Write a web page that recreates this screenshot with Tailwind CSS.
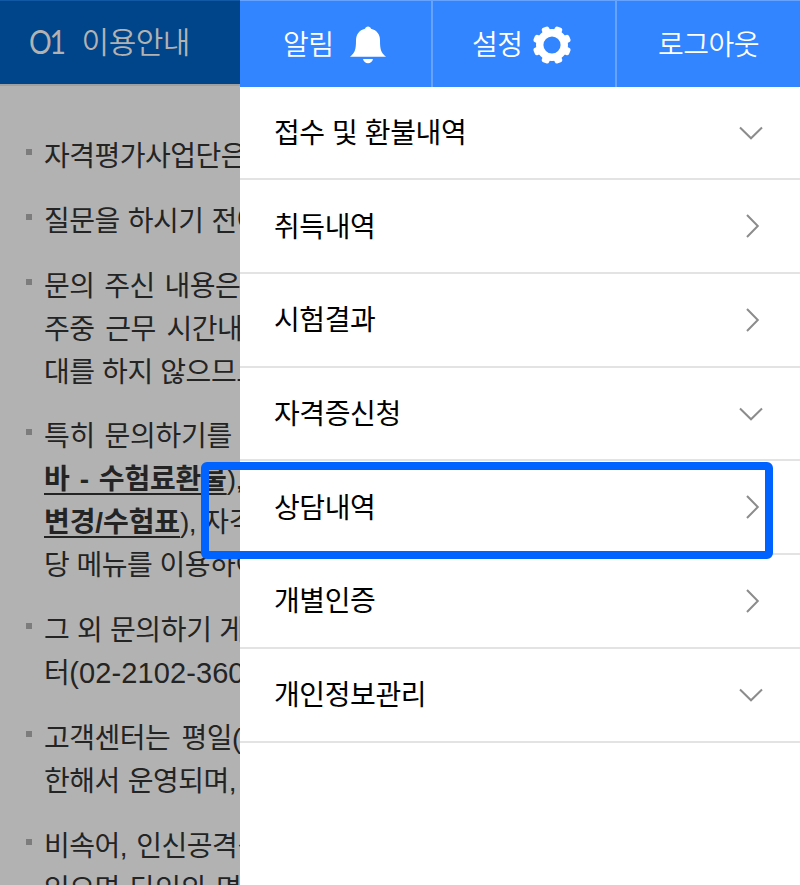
<!DOCTYPE html>
<html lang="ko">

<head>
    <meta charset="UTF-8">
    <meta name="viewport" content="width=device-width, initial-scale=1.0">
    <title>이용안내</title>
    <script src="https://cdn.jsdelivr.net/npm/@tailwindcss/browser@4"></script>
</head>

<body class="relative h-[885px] w-[800px] overflow-hidden bg-[#b2b2b2] font-['Liberation_Sans','Noto_Sans_CJK_KR',sans-serif] text-[28px] tracking-[-0.5px]">
    <!-- Page -->
    <div class="w-full">
        <header class="flex h-[86px] items-center border-t border-b-2 border-t-[#1158a5] border-b-[#a0a0a0] bg-[#004489] pb-[2px] pl-[29px] font-['Lato','Noto_Sans_CJK_KR',sans-serif] text-[#b2b2b2]">
            <span class="mr-[12px] origin-left scale-x-[0.86] text-[33px] tracking-[-2.5px]">O1</span>
            <h1 class="text-[30px] font-[350] tracking-[-0.5px]">이용안내</h1>
        </header>
        <ul class="space-y-[21.8px] pt-[47px] pl-[26px] leading-[43px] whitespace-nowrap text-[#242424]">
            <li class="flex">
                <i class="mt-[16px] mr-[12px] size-[6px] bg-[#7c7c7c]"></i>
                <p class="translate-y-[2px]">자격평가사업단은</p>
            </li>
            <li class="flex">
                <i class="mt-[16px] mr-[12px] size-[6px] bg-[#7c7c7c]"></i>
                <p class="translate-y-[2px] [word-spacing:0.7px]">질문을 하시기 전에</p>
            </li>
            <li class="flex">
                <i class="mt-[16px] mr-[12px] size-[6px] bg-[#7c7c7c]"></i>
                <div class="translate-y-[2px]">
                    <p class="[word-spacing:2.5px]">문의 주신 내용은</p>
                    <p class="[word-spacing:3.5px]">주중 근무 시간내</p>
                    <p class="tracking-[-0.4px]">대를 하지 않으므로</p>
                </div>
            </li>
            <li class="flex">
                <i class="mt-[16px] mr-[12px] size-[6px] bg-[#7c7c7c]"></i>
                <div class="translate-y-[2px]">
                    <p class="tracking-[-0.3px] [word-spacing:2.2px]">특히 문의하기를</p>
                    <p class="[word-spacing:2.5px]"><b class="tracking-[-0.2px] underline decoration-2 underline-offset-4">바 - 수험료환불</b>),</p>
                    <p><b class="tracking-[-0.1px] underline decoration-2 underline-offset-4">변경/수험표</b>), 자격</p>
                    <p>당 메뉴를 이용하여</p>
                </div>
            </li>
            <li class="flex">
                <i class="mt-[16px] mr-[12px] size-[6px] bg-[#7c7c7c]"></i>
                <div class="translate-y-[2px]">
                    <p class="tracking-[-0.3px]">그 외 문의하기 게</p>
                    <p>터<span class="text-[29px] tracking-[0.1px]">(02-2102-3600</span></p>
                </div>
            </li>
            <li class="flex">
                <i class="mt-[16px] mr-[12px] size-[6px] bg-[#7c7c7c]"></i>
                <div class="translate-y-[2px]">
                    <p class="[word-spacing:4px]">고객센터는 평일(</p>
                    <p class="[word-spacing:0.7px]">한해서 운영되며,</p>
                </div>
            </li>
            <li class="flex">
                <i class="mt-[16px] mr-[12px] size-[6px] bg-[#7c7c7c]"></i>
                <div class="translate-y-[2px]">
                    <p class="[word-spacing:2px]">비속어, 인신공격성</p>
                    <p class="[word-spacing:3px]">있으면 타인의 명</p>
                </div>
            </li>
        </ul>
    </div>

    <!-- Side menu -->
    <aside class="absolute top-0 left-[240px] h-[885px] w-[560px] bg-white">
        <nav class="flex h-[87px] border-t border-[#66a3ff] bg-[#3385ff] pt-px font-[350] text-white">
            <a class="-mt-px flex w-[193px] items-center border-r-2 border-[#66a3ff] pt-[2px] pl-[43px]">
                <span class="pt-[2px]">알림</span>
                <svg class="ml-[16px] h-[38px] w-[36px]" viewBox="0 0 36 38" fill="currentColor">
                    <path d="M18 .5c-1.500 0-2.500 1-3 2.200C9 4 6 8.500 6 14.500c0 9-1 12.500-6 16.200h36c-5-3.700-6-7.200-6-16.200C30 8.500 27 4 21 2.700 20.500 1.500 19.500.5 18 .5z" />
                    <path d="M13 33h10c-.5 2.400-2.500 4.200-5 4.200s-4.500-1.800-5-4.200z" />
                </svg>
            </a>
            <a class="-mt-px flex w-[184px] items-center border-r-2 border-[#66a3ff] pt-[2px] pl-[39px]">
                <span class="pt-[2px]">설정</span>
                <svg class="ml-[10px] size-[38px]" viewBox="-19 -19 38 38" fill="currentColor">
                    <circle r="12.300" fill="none" stroke="currentColor" stroke-width="7.400" />
                    <rect x="-3.900" y="-19.200" width="7.800" height="8" rx="2.400" transform="rotate(22.5)" />
                    <rect x="-3.900" y="-19.200" width="7.800" height="8" rx="2.400" transform="rotate(67.5)" />
                    <rect x="-3.900" y="-19.200" width="7.800" height="8" rx="2.400" transform="rotate(112.5)" />
                    <rect x="-3.900" y="-19.200" width="7.800" height="8" rx="2.400" transform="rotate(157.5)" />
                    <rect x="-3.900" y="-19.200" width="7.800" height="8" rx="2.400" transform="rotate(202.5)" />
                    <rect x="-3.900" y="-19.200" width="7.800" height="8" rx="2.400" transform="rotate(247.5)" />
                    <rect x="-3.900" y="-19.200" width="7.800" height="8" rx="2.400" transform="rotate(292.5)" />
                    <rect x="-3.900" y="-19.200" width="7.800" height="8" rx="2.400" transform="rotate(337.5)" />
                </svg>
            </a>
            <a class="flex flex-1 items-center justify-center pt-[3px]">로그아웃</a>
        </nav>
        <ul class="-mt-[0.3px] text-black">
            <li class="flex h-[93.7px] items-center justify-between border-b-2 border-[#e3e3e3] pr-[36px] pl-[34px]">
                <span class="pt-[3px] tracking-[-0.4px]">접수 및 환불내역</span>
                <svg class="h-[14px] w-[26px]" viewBox="0 0 26 14" fill="none" stroke="#8c8c8c" stroke-width="2"><path d="M2 1.500 13 12.300 24 1.500" /></svg>
            </li>
            <li class="flex h-[93.7px] items-center justify-between border-b-2 border-[#e3e3e3] pr-[40px] pl-[34px]">
                <span class="pt-[3px] tracking-[-0.4px]">취득내역</span>
                <svg class="h-[26px] w-[14px]" viewBox="0 0 14 26" fill="none" stroke="#8c8c8c" stroke-width="2"><path d="M1 2 11.800 13 1 24" /></svg>
            </li>
            <li class="flex h-[93.7px] items-center justify-between border-b-2 border-[#e3e3e3] pr-[40px] pl-[34px]">
                <span class="pt-[3px] tracking-[-0.4px]">시험결과</span>
                <svg class="h-[26px] w-[14px]" viewBox="0 0 14 26" fill="none" stroke="#8c8c8c" stroke-width="2"><path d="M1 2 11.800 13 1 24" /></svg>
            </li>
            <li class="flex h-[93.7px] items-center justify-between border-b-2 border-[#e3e3e3] pr-[36px] pl-[34px]">
                <span class="pt-[3px] tracking-[-0.4px]">자격증신청</span>
                <svg class="h-[14px] w-[26px]" viewBox="0 0 26 14" fill="none" stroke="#8c8c8c" stroke-width="2"><path d="M2 1.500 13 12.300 24 1.500" /></svg>
            </li>
            <li class="flex h-[93.7px] items-center justify-between border-b-2 border-[#e3e3e3] pr-[40px] pl-[34px]">
                <span class="pt-[3px] tracking-[-0.4px]">상담내역</span>
                <svg class="h-[26px] w-[14px]" viewBox="0 0 14 26" fill="none" stroke="#8c8c8c" stroke-width="2"><path d="M1 2 11.800 13 1 24" /></svg>
            </li>
            <li class="flex h-[93.7px] items-center justify-between border-b-2 border-[#e3e3e3] pr-[40px] pl-[34px]">
                <span class="pt-[3px] tracking-[-0.4px]">개별인증</span>
                <svg class="h-[26px] w-[14px]" viewBox="0 0 14 26" fill="none" stroke="#8c8c8c" stroke-width="2"><path d="M1 2 11.800 13 1 24" /></svg>
            </li>
            <li class="flex h-[93.7px] items-center justify-between border-b-2 border-[#e3e3e3] pr-[36px] pl-[34px]">
                <span class="pt-[3px] tracking-[-0.4px]">개인정보관리</span>
                <svg class="h-[14px] w-[26px]" viewBox="0 0 26 14" fill="none" stroke="#8c8c8c" stroke-width="2"><path d="M2 1.500 13 12.300 24 1.500" /></svg>
            </li>
        </ul>
    </aside>

    <!-- Highlight -->
    <div class="absolute top-[462px] left-[201px] h-[97px] w-[572px] rounded-[6px] border-8 border-[#0062ff]"></div>
</body>

</html>
